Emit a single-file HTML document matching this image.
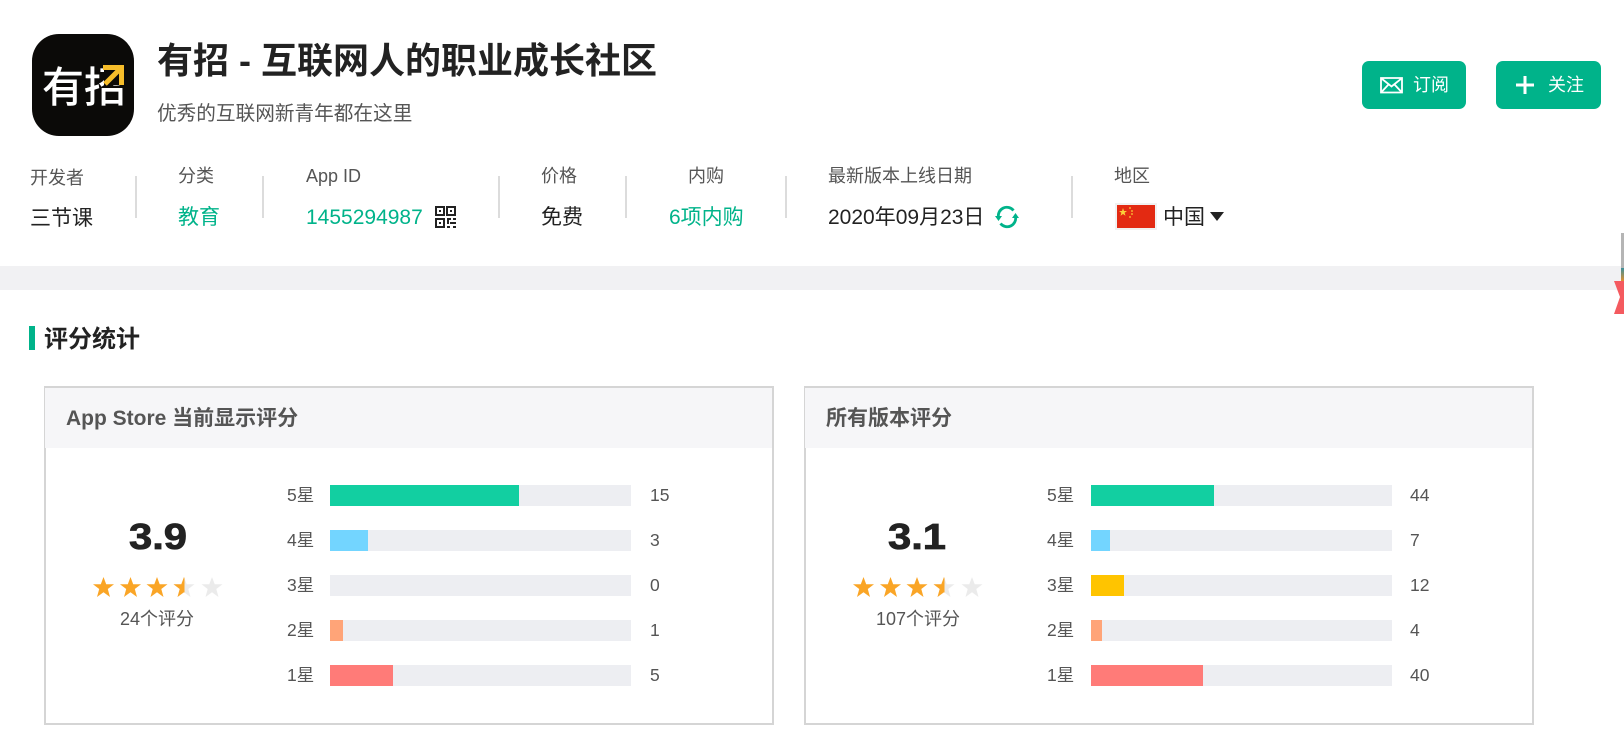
<!DOCTYPE html>
<html lang="zh"><head><meta charset="utf-8"><title>有招</title>
<style>
html,body{margin:0;padding:0;background:#fff}
body{width:1624px;height:734px;position:relative;overflow:hidden;font-family:"Liberation Sans","Noto Sans CJK SC",sans-serif;color:#222}
.a{position:absolute;white-space:nowrap}
.t{position:absolute;white-space:nowrap;line-height:30px;height:30px}
.lb{font-size:18px;color:#555}
.val{font-size:21px;color:#222}
.g{color:#00b38a}
.dv{position:absolute;top:176px;width:2px;height:42px;background:#dcdcdc}
.btn{position:absolute;top:61px;height:48px;background:#00b38a;border-radius:7px}
.card{position:absolute;top:386px;width:726px;height:335px;border:2px solid #d5d5d5}
.hd{position:absolute;left:-1px;top:0;width:727px;height:60px;background:#f6f6f8}
.bar{position:absolute;width:301px;height:21px;background:#edeef2}
.bar i{display:block;height:21px}
.rl{font-size:17.5px;color:#555}
.sc{position:absolute;width:116px;text-align:center;top:515px;font-size:36px;font-weight:700;line-height:44px;-webkit-text-stroke:.8px #222;transform:scaleX(1.16);white-space:nowrap}
</style></head><body>

<svg class="a" style="left:31px;top:34px" width="104" height="104" viewBox="0 0 104 104">
<rect x="1" y="0" width="102" height="102" rx="27" fill="#0b0a08"/>
<text x="11" y="68" font-size="42" fill="#fff" font-family="'Noto Sans CJK SC',sans-serif" font-weight="500">有</text>
<text x="53" y="68" font-size="42" fill="#fff" font-family="'Noto Sans CJK SC',sans-serif" font-weight="500">招</text>
<rect x="73" y="26" width="24" height="25" fill="#0b0a08"/>
<path d="M72 33.500H90.500V51M89.500 34.500L74 50" fill="none" stroke="#f6bd2a" stroke-width="5"/>
</svg>

<div class="a" style="left:157px;top:39px;font-size:36px;font-weight:700;line-height:44px;color:#222">有招 - 互联网人的职业成长社区</div>
<div class="a" style="left:157px;top:99px;font-size:19.650px;line-height:30px;color:#555">优秀的互联网新青年都在这里</div>

<div class="btn" style="left:1362px;width:104px"></div>
<svg class="a" style="left:1380px;top:76px" width="23" height="18" viewBox="0 0 23 18"><path d="M1 2H22V16.500H1ZM1.500 2.500L11.500 10.500L21.500 2.500M1.500 16L8.500 8.500M21.500 16L14.500 8.500" fill="none" stroke="#fff" stroke-width="1.800"/></svg>
<div class="t" style="left:1413px;top:70px;font-size:18px;color:#fff">订阅</div>
<div class="btn" style="left:1496px;width:105px"></div>
<svg class="a" style="left:1515px;top:75px" width="20" height="20" viewBox="0 0 20 20"><path d="M10 1V19M1 10H19" stroke="#fff" stroke-width="3"/></svg>
<div class="t" style="left:1548px;top:70px;font-size:18px;color:#fff">关注</div>

<div class="t lb" style="left:30px;top:163px">开发者</div>
<div class="t val" style="left:30px;top:204px">三节课</div>
<div class="dv" style="left:135px"></div>
<div class="t lb" style="left:178px;top:161px">分类</div>
<div class="t val g" style="left:178px;top:203px">教育</div>
<div class="dv" style="left:262px"></div>
<div class="t lb" style="left:306px;top:161px">App ID</div>
<div class="t val g" style="left:306px;top:203px">1455294987</div>
<svg class="a" style="left:435px;top:206px" width="21" height="22" viewBox="0 0 21 22"><g fill="none" stroke="#222" stroke-width="2"><rect x="1" y="1" width="8" height="8"/><rect x="12" y="1" width="8" height="8"/><rect x="1" y="13" width="8" height="8"/></g><g fill="#222"><rect x="4" y="4" width="2" height="2"/><rect x="15" y="4" width="2" height="2"/><rect x="4" y="16" width="2" height="2"/><rect x="12" y="12" width="4" height="2"/><rect x="18" y="12" width="3" height="2"/><rect x="12" y="14" width="2" height="4"/><rect x="15" y="16" width="6" height="2"/><rect x="12" y="20" width="3" height="2"/><rect x="18" y="20" width="3" height="2"/></g></svg>
<div class="dv" style="left:498px"></div>
<div class="t lb" style="left:541px;top:161px">价格</div>
<div class="t val" style="left:541px;top:203px">免费</div>
<div class="dv" style="left:625px"></div>
<div class="t lb" style="left:688px;top:161px">内购</div>
<div class="t val g" style="left:669px;top:203px">6项内购</div>
<div class="dv" style="left:785px"></div>
<div class="t lb" style="left:828px;top:161px">最新版本上线日期</div>
<div class="t val" style="left:828px;top:203px">2020年09月23日</div>
<svg class="a" style="left:994px;top:205px" width="26" height="24" viewBox="0 0 26 24"><g fill="none" stroke="#00b38a" stroke-width="2.800"><path d="M4.500 12.500A8.500 8.500 0 0 1 19.500 5.500"/><path d="M21.500 11.500A8.500 8.500 0 0 1 6.500 18.500"/></g><path d="M1 11H8L4.500 16ZM18 13H25L21.500 8Z" fill="#00b38a"/></svg>
<div class="dv" style="left:1071px"></div>
<div class="t lb" style="left:1114px;top:161px">地区</div>
<svg class="a" style="left:1115px;top:203px" width="42" height="27" viewBox="0 0 42 27"><rect width="42" height="27" fill="#f1f1f1"/><rect x="2" y="2" width="38" height="23" fill="#e32a12"/><path d="M8 5L9 8H12L9.600 9.800L10.500 12.800L8 11L5.500 12.800L6.400 9.800L4 8H7Z" fill="#fbd03a"/><g fill="#fbd03a"><circle cx="15" cy="5" r=".9"/><circle cx="17" cy="8" r=".9"/><circle cx="17" cy="11" r=".9"/><circle cx="15" cy="14" r=".9"/></g></svg>
<div class="t val" style="left:1163px;top:203px">中国</div>
<div class="a" style="left:1210px;top:212px;width:0;height:0;border-left:7px solid transparent;border-right:7px solid transparent;border-top:9px solid #222"></div>

<div class="a" style="left:0;top:266px;width:1624px;height:24px;background:#f1f1f3"></div>
<div class="a" style="left:1621px;top:233px;width:3px;height:44px;background:#b5b5b5"></div>
<div class="a" style="left:1621px;top:268px;width:3px;height:13px;background:linear-gradient(#3a8f9a,#e09030)"></div>
<svg class="a" style="left:1612px;top:281px" width="12" height="33" viewBox="0 0 12 33"><path d="M2 0H12V33H2L8 16Z" fill="#f45a5f"/></svg>

<div class="a" style="left:29px;top:326px;width:6px;height:24px;background:#00b38a"></div>
<div class="a" style="left:44px;top:325px;font-size:24px;font-weight:700;line-height:30px">评分统计</div>

<div class="card" style="left:44px">
<div class="hd"></div>
<div class="t" style="left:20px;top:16px;font-size:21px;font-weight:700;color:#555">App Store 当前显示评分</div>
</div>
<div class="card" style="left:804px">
<div class="hd"></div>
<div class="t" style="left:20px;top:16px;font-size:21px;font-weight:700;color:#555">所有版本评分</div>
</div>

<svg width="0" height="0" style="position:absolute"><defs>
<path id="s" d="M10.500 0L13.200 7.300H21L14.800 12L17 20L10.500 15.200L4 20L6.200 12L0 7.300H7.800Z"/>
<clipPath id="h"><rect x="0" y="0" width="11" height="21"/></clipPath>
</defs></svg>

<!-- card 1 -->
<div class="sc" style="left:100px">3.9</div>
<svg class="a" style="left:93px;top:577px" width="132" height="21"><g fill="#faa526"><use href="#s" x="0"/><use href="#s" x="27"/><use href="#s" x="53.500"/></g><use href="#s" x="80.500" fill="#ebebeb"/><g transform="translate(80.500 0)"><use href="#s" fill="#faa526" clip-path="url(#h)"/></g><use href="#s" x="108.500" fill="#ebebeb"/></svg>
<div class="t" style="left:99px;width:116px;text-align:center;top:604px;font-size:18px;color:#555">24个评分</div>

<div class="t rl" style="left:287px;top:480px">5星</div><div class="bar" style="left:330px;top:485px"><i style="width:189px;background:#12cfa1"></i></div><div class="t rl" style="left:650px;top:480px">15</div>
<div class="t rl" style="left:287px;top:525px">4星</div><div class="bar" style="left:330px;top:530px"><i style="width:38px;background:#73d5ff"></i></div><div class="t rl" style="left:650px;top:525px">3</div>
<div class="t rl" style="left:287px;top:570px">3星</div><div class="bar" style="left:330px;top:575px"></div><div class="t rl" style="left:650px;top:570px">0</div>
<div class="t rl" style="left:287px;top:615px">2星</div><div class="bar" style="left:330px;top:620px"><i style="width:13px;background:#ffa478"></i></div><div class="t rl" style="left:650px;top:615px">1</div>
<div class="t rl" style="left:287px;top:660px">1星</div><div class="bar" style="left:330px;top:665px"><i style="width:63px;background:#ff7b78"></i></div><div class="t rl" style="left:650px;top:660px">5</div>

<!-- card 2 -->
<div class="sc" style="left:859px">3.1</div>
<svg class="a" style="left:853px;top:577px" width="132" height="21"><g fill="#faa526"><use href="#s" x="0"/><use href="#s" x="27"/><use href="#s" x="53.500"/></g><use href="#s" x="80.500" fill="#ebebeb"/><g transform="translate(80.500 0)"><use href="#s" fill="#faa526" clip-path="url(#h)"/></g><use href="#s" x="108.500" fill="#ebebeb"/></svg>
<div class="t" style="left:860px;width:116px;text-align:center;top:604px;font-size:18px;color:#555">107个评分</div>

<div class="t rl" style="left:1047px;top:480px">5星</div><div class="bar" style="left:1091px;top:485px"><i style="width:123px;background:#12cfa1"></i></div><div class="t rl" style="left:1410px;top:480px">44</div>
<div class="t rl" style="left:1047px;top:525px">4星</div><div class="bar" style="left:1091px;top:530px"><i style="width:19px;background:#73d5ff"></i></div><div class="t rl" style="left:1410px;top:525px">7</div>
<div class="t rl" style="left:1047px;top:570px">3星</div><div class="bar" style="left:1091px;top:575px"><i style="width:33px;background:#ffc400"></i></div><div class="t rl" style="left:1410px;top:570px">12</div>
<div class="t rl" style="left:1047px;top:615px">2星</div><div class="bar" style="left:1091px;top:620px"><i style="width:11px;background:#ffa478"></i></div><div class="t rl" style="left:1410px;top:615px">4</div>
<div class="t rl" style="left:1047px;top:660px">1星</div><div class="bar" style="left:1091px;top:665px"><i style="width:112px;background:#ff7b78"></i></div><div class="t rl" style="left:1410px;top:660px">40</div>

</body></html>
